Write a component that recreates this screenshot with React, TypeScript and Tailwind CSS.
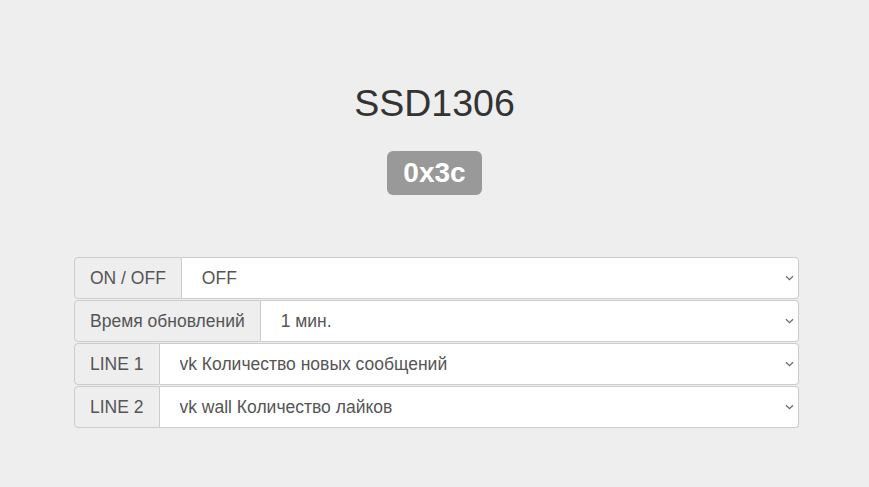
import React, { useState } from 'react';

type Row = {
    label: string;
    value: string;
    options: string[];
};

const rows: Row[] = [
    { label: 'ON / OFF', value: 'OFF', options: ['OFF', 'ON'] },
    { label: 'Время обновлений', value: '1 мин.', options: ['1 мин.', '5 мин.', '10 мин.'] },
    { label: 'LINE 1', value: 'vk Количество новых сообщений', options: ['vk Количество новых сообщений'] },
    { label: 'LINE 2', value: 'vk wall Количество лайков', options: ['vk wall Количество лайков'] },
];

const Chevron = () => (
    <svg width="9" height="6" viewBox="0 0 9 6" className="pointer-events-none absolute right-[5px] top-1/2 -translate-y-1/2">
        <path d="M1 1.2 L4.5 4.6 L8 1.2" fill="none" stroke="#6b6b6b" strokeWidth="1.3" />
    </svg>
);

const App: React.FC = () => {
    const [values, setValues] = useState(rows.map((r) => r.value));

    return (
        <div className="min-h-[487px] w-full bg-[#eeeeee] font-['Liberation_Sans',Arial,sans-serif] text-[#333]">
            <div className="flex flex-col items-center pt-[80px]">
                {/* Title */}
                <h1 className="text-[37.5px] leading-[46px] text-[#333]">SSD1306</h1>
                <span className="mt-[25px] rounded-[6px] bg-[#999] px-[16px] py-[7px] text-[28px] font-bold leading-[30px] text-white">
                    0x3c
                </span>
            </div>

            {/* Settings */}
            <div className="mx-[74px] mt-[62px] flex w-[725px] flex-col gap-[1px]">
                {rows.map((row, i) => (
                    <div key={row.label} className="flex h-[42px]">
                        <span className="flex items-center rounded-l-[4px] border border-[#ccc] bg-[#eee] px-[15px] text-[17.5px] text-[#555]">
                            {row.label}
                        </span>
                        <div className="relative flex-1">
                            <select
                                value={values[i]}
                                onChange={(e) => {
                                    const next = [...values];
                                    next[i] = e.target.value;
                                    setValues(next);
                                }}
                                className="h-full w-full appearance-none rounded-r-[4px] border border-l-0 border-[#ccc] bg-white pl-[20px] font-['Liberation_Sans',Arial,sans-serif] text-[17.5px] text-[#555] outline-none"
                            >
                                {row.options.map((o) => (
                                    <option key={o} value={o}>
                                        {o}
                                    </option>
                                ))}
                            </select>
                            <Chevron />
                        </div>
                    </div>
                ))}
            </div>
        </div>
    );
};

export default App;
